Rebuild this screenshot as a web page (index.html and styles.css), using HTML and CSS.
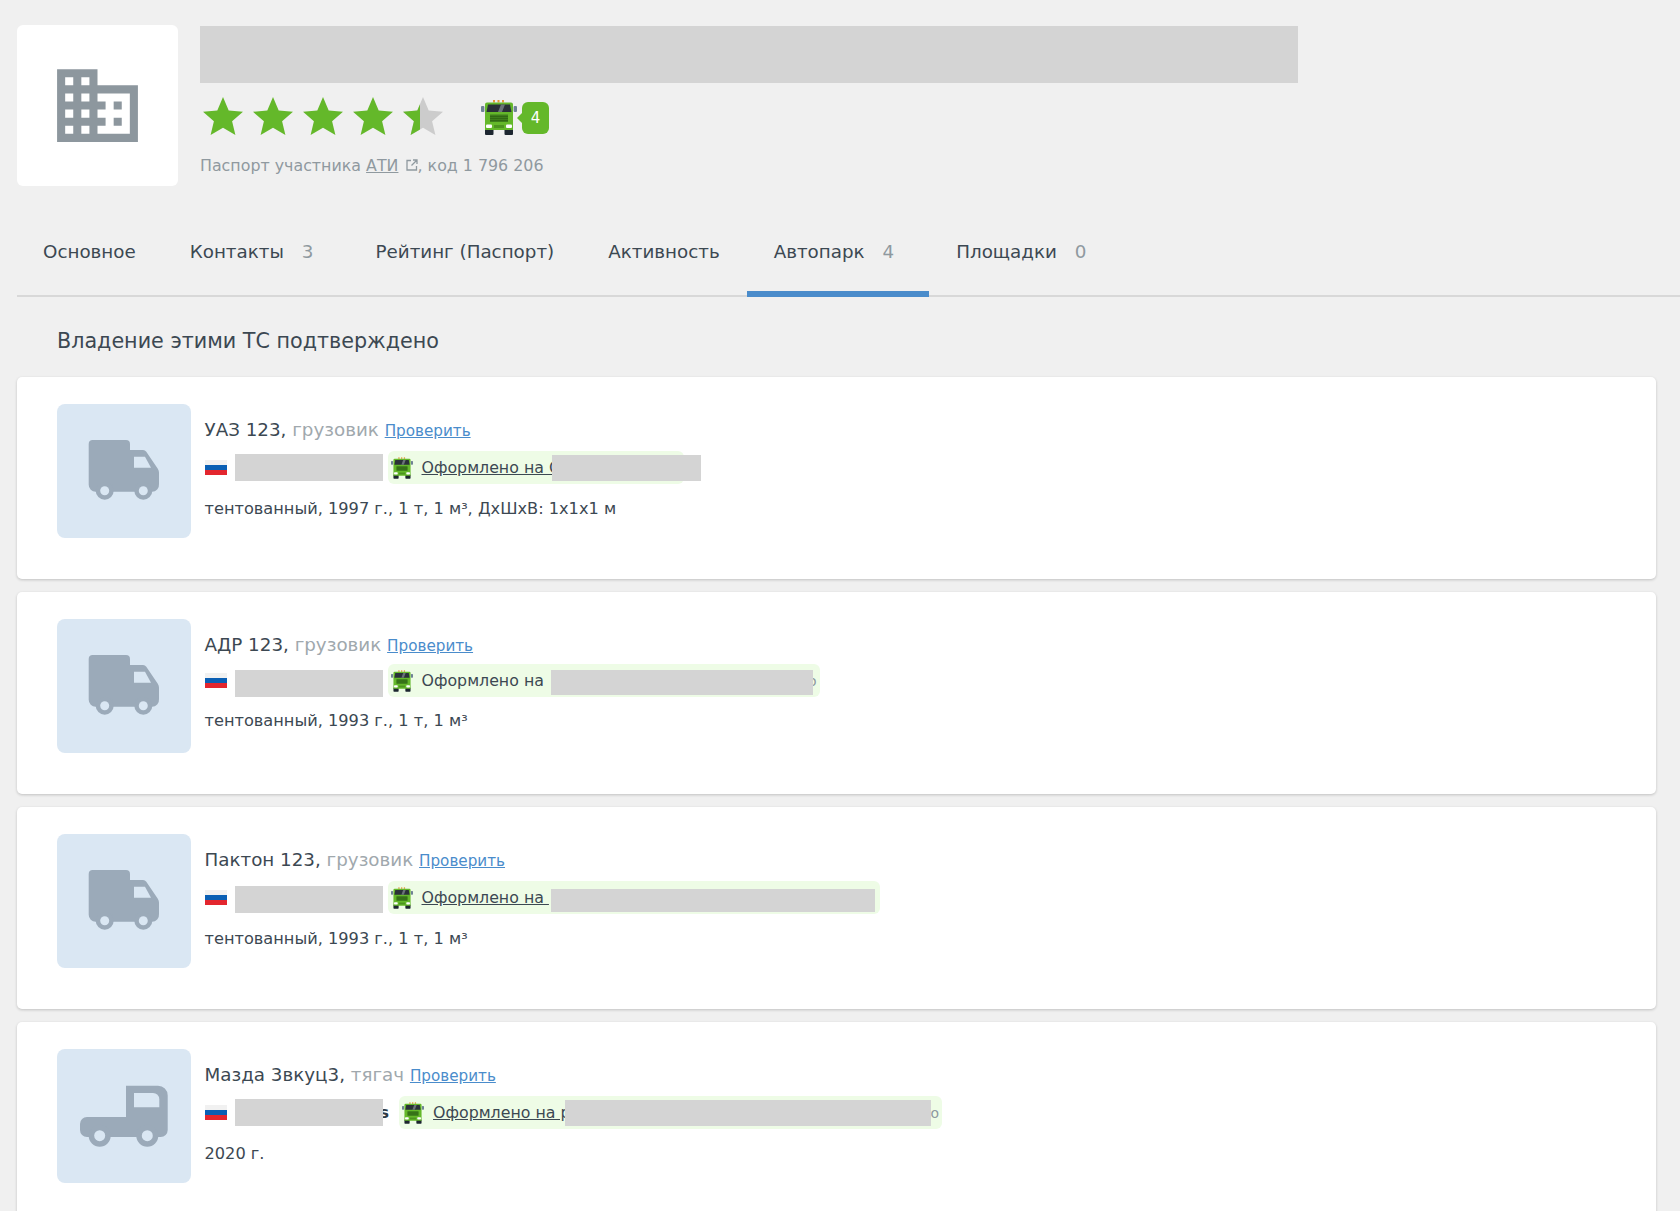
FILE: index.html
```html
<!DOCTYPE html>
<html lang="ru">
<head>
<meta charset="utf-8">
<title>Автопарк</title>
<link rel="stylesheet" href="styles.css">
</head>
<body>
<svg class="defs" width="0" height="0" aria-hidden="true">
  <defs>
    <symbol id="green-truck" viewBox="0 0 36 35">
      <rect x="12" y="0" width="2" height="2.5" fill="#e8963c"/><rect x="16.5" y="0" width="2" height="2.5" fill="#e8963c"/><rect x="21" y="0" width="2" height="2.5" fill="#e8963c"/>
      <rect x="0" y="6" width="3.4" height="6" rx="1" fill="#6f8296"/><rect x="32.6" y="6" width="3.4" height="6" rx="1" fill="#6f8296"/>
      <rect x="4" y="28" width="8.5" height="7" rx="1" fill="#1d2630"/><rect x="23.5" y="28" width="8.5" height="7" rx="1" fill="#1d2630"/>
      <path d="M6 2.5h24a2 2 0 0 1 2 2V30H4V4.500a2 2 0 0 1 2-2z" fill="#64b82a"/>
      <path d="M7 4.500h22l1.500 7.500h-25z" fill="#2a3138"/>
      <path d="M20 4.500h4l-3 7.500h-4z" fill="#6a7278"/>
      <rect x="9" y="14.500" width="18" height="7.500" fill="#3e7e1c"/>
      <path d="M9 16.500h18M9 18.500h18M9 20.500h18" stroke="#2e6512" stroke-width=".8"/>
      <rect x="5" y="24.500" width="6" height="3.500" rx="1" fill="#fff"/><rect x="25" y="24.500" width="6" height="3.500" rx="1" fill="#fff"/>
      <rect x="13" y="25" width="10" height="3" fill="#4c9420"/>
    </symbol>
    <symbol id="van" viewBox="0 0 134 134">
      <path d="M35.700 36H69a4 4 0 0 1 4 4v6h13a4 4 0 0 1 3.300 1.700l11.500 17a7 7 0 0 1 1.200 4V80a7 7 0 0 1-7 7.700H38.700a7 7 0 0 1-7-7V40a4 4 0 0 1 4-4z" fill="#9baab9"/>
      <path d="M77 52.700h11l6 11H77z" fill="#dae7f3"/>
      <circle cx="47.700" cy="86.700" r="9" fill="#9baab9"/><circle cx="47.700" cy="86.700" r="4.500" fill="#dae7f3"/>
      <circle cx="86.300" cy="86.700" r="9" fill="#9baab9"/><circle cx="86.300" cy="86.700" r="4.500" fill="#dae7f3"/>
    </symbol>
    <symbol id="tractor" viewBox="0 0 134 134">
      <path d="M69 36.700h32a9.700 9.700 0 0 1 9.700 9.700V81a7 7 0 0 1-7 7H30a7 7 0 0 1-7-7V75a7 7 0 0 1 7-7h39z" fill="#9baab9"/>
      <path d="M77 44h19a6.300 6.300 0 0 1 6.300 6.300v8H77z" fill="#dae7f3"/>
      <circle cx="42.700" cy="86.700" r="11" fill="#9baab9"/><circle cx="42.700" cy="86.700" r="5.500" fill="#dae7f3"/>
      <circle cx="90.300" cy="86.700" r="11" fill="#9baab9"/><circle cx="90.300" cy="86.700" r="5.500" fill="#dae7f3"/>
    </symbol>
    <symbol id="star" viewBox="0 0 40 38">
      <path d="M20 0l5.700 13.600 14.300 1.200-10.900 9.500 3.300 13.700-12.400-7.300-12.400 7.300 3.300-13.700L0 14.800l14.300-1.200z"/>
    </symbol>
    <clipPath id="star-part"><rect x="0" y="0" width="17" height="38"/></clipPath>
  </defs>
</svg>

<header class="profile">
  <div class="logo">
    <svg class="logo-icon" viewBox="0 0 24 24"><path d="M12 7V3H2v18h20V7H12zM6 19H4v-2h2v2zm0-4H4v-2h2v2zm0-4H4V9h2v2zm0-4H4V5h2v2zm4 12H8v-2h2v2zm0-4H8v-2h2v2zm0-4H8V9h2v2zm0-4H8V5h2v2zm10 12h-8v-2h2v-2h-2v-2h2v-2h-2V9h8v10zm-2-8h-2v2h2v-2zm0 4h-2v2h2v-2z"/></svg>
  </div>
  <div class="profile-main">
    <div class="title-mask"></div>
    <div class="rating-row">
      <div class="stars">
        <svg class="star"><use href="#star"/></svg>
        <svg class="star"><use href="#star"/></svg>
        <svg class="star"><use href="#star"/></svg>
        <svg class="star"><use href="#star"/></svg>
        <svg class="star star-half" viewBox="0 0 40 38"><use href="#star" width="40" height="38"/><g clip-path="url(#star-part)"><use class="star-fill" href="#star" width="40" height="38"/></g></svg>
      </div>
      <svg class="fleet-icon"><use href="#green-truck"/></svg>
      <span class="fleet-badge">4</span>
    </div>
    <p class="passport">Паспорт участника <a href="#">АТИ</a> <svg class="ext-icon" viewBox="0 0 12 12"><path d="M5 1.500H1v9.500h9.500V7M7 1h4v4M11 1L5.500 6.500" fill="none" stroke="currentColor" stroke-width="1.300"/></svg>, код 1 796 206</p>
  </div>
</header>

<nav class="tabs">
  <a class="tab" href="#">Основное</a>
  <a class="tab" href="#">Контакты<span class="count">3</span></a>
  <a class="tab" href="#">Рейтинг (Паспорт)</a>
  <a class="tab" href="#">Активность</a>
  <a class="tab tab-active" href="#">Автопарк<span class="count">4</span></a>
  <a class="tab" href="#">Площадки<span class="count">0</span></a>
</nav>

<h2 class="section-title">Владение этими ТС подтверждено</h2>

<main class="cards">
  <article class="card">
    <div class="thumb"><svg class="thumb-icon"><use href="#van"/></svg></div>
    <div class="info">
      <div class="name">УАЗ 123, <span class="kind">грузовик</span> <a class="check" href="#">Проверить</a></div>
      <div class="plate-row">
        <span class="flag"></span><span class="plate"></span>
        <div class="owner owner-1"><svg class="owner-icon"><use href="#green-truck"/></svg><a href="#">Оформлено на О</a><span class="mask mask-1"></span></div>
      </div>
      <div class="spec">тентованный, 1997 г., 1 т, 1 м³, ДхШхВ: 1х1х1 м</div>
    </div>
  </article>
  <article class="card">
    <div class="thumb"><svg class="thumb-icon"><use href="#van"/></svg></div>
    <div class="info">
      <div class="name">АДР 123, <span class="kind">грузовик</span> <a class="check" href="#">Проверить</a></div>
      <div class="plate-row plate-row-plain">
        <span class="flag"></span><span class="plate plate-low"></span>
        <div class="owner owner-2"><svg class="owner-icon"><use href="#green-truck"/></svg><span>Оформлено на</span><span class="tail">о</span><span class="mask mask-2"></span></div>
      </div>
      <div class="spec">тентованный, 1993 г., 1 т, 1 м³</div>
    </div>
  </article>
  <article class="card">
    <div class="thumb"><svg class="thumb-icon"><use href="#van"/></svg></div>
    <div class="info">
      <div class="name">Пактон 123, <span class="kind">грузовик</span> <a class="check" href="#">Проверить</a></div>
      <div class="plate-row">
        <span class="flag"></span><span class="plate plate-mid"></span>
        <div class="owner owner-3"><svg class="owner-icon"><use href="#green-truck"/></svg><a href="#">Оформлено на&nbsp;</a><span class="mask mask-3"></span></div>
      </div>
      <div class="spec">тентованный, 1993 г., 1 т, 1 м³</div>
    </div>
  </article>
  <article class="card">
    <div class="thumb"><svg class="thumb-icon"><use href="#tractor"/></svg></div>
    <div class="info">
      <div class="name">Мазда 3вкуц3, <span class="kind">тягач</span> <a class="check" href="#">Проверить</a></div>
      <div class="plate-row">
        <span class="flag"></span><span class="plate"></span><span class="plate-end">s</span>
        <div class="owner owner-4"><svg class="owner-icon"><use href="#green-truck"/></svg><a href="#">Оформлено на р</a><span class="tail">о</span><span class="mask mask-4"></span></div>
      </div>
      <div class="spec">2020 г.</div>
    </div>
  </article>
</main>
</body>
</html>
```
FILE: styles.css
```css
html, body {
  margin: 0;
  height: 100%;
  overflow: hidden;
}
body {
  background: #f0f0f0;
  color: #3c4852;
  font-family: "DejaVu Sans", Verdana, sans-serif;
  font-size: 16px;
}
.defs { display: block; height: 0; }
a { color: inherit; }

.profile {
  display: flex;
  gap: 22px;
  height: 161px;
  padding: 25px 0 0 17px;
}
.logo {
  width: 161px;
  height: 161px;
  background: #fff;
  border-radius: 6px;
  display: flex;
  align-items: center;
  justify-content: center;
}
.logo-icon { width: 97px; height: 97px; fill: #8d979e; }
.profile-main { display: flex; flex-direction: column; }
.title-mask {
  width: 1098px;
  height: 57px;
  margin-top: 1px;
  background: #d4d4d4;
}
.rating-row {
  display: flex;
  align-items: center;
  height: 40px;
  margin-top: 13px;
}
.stars { display: flex; gap: 10px; margin-left: 3px; }
.star { width: 40px; height: 38px; fill: #ccc; display: block; }
.star:not(.star-half) { fill: #64b82a; }
.star-fill { fill: #64b82a; }
.fleet-icon { width: 36px; height: 35px; margin: 2px 0 0 38px; }
.fleet-badge {
  position: relative;
  width: 27px;
  height: 32px;
  margin: 3px 0 0 5px;
  background: #64b82a;
  border-radius: 6px;
  color: #fff;
  font-size: 15px;
  line-height: 32px;
  text-align: center;
}
.fleet-badge::before {
  content: "";
  position: absolute;
  left: -5px;
  top: 11px;
  border-style: solid;
  border-width: 5px 5px 5px 0;
  border-color: transparent #64b82a transparent transparent;
}
.passport {
  margin: 20px 0 0;
  color: #8f999f;
  font-size: 15.85px;
  line-height: 20px;
}
.ext-icon { width: 12px; height: 12px; margin-left: 2px; }

.tabs {
  display: flex;
  margin: 0 0 0 17px;
  height: 109px;
  border-bottom: 2px solid #d8d8d8;
}
.tab {
  display: block;
  box-sizing: border-box;
  height: 111px;
  padding: 55px 27px 0;
  color: #3c4852;
  font-size: 18.3px;
  line-height: 22px;
  text-decoration: none;
}
.tab:first-child { padding-left: 26px; }
.tab-active { border-bottom: 6px solid #4a8ccb; }
.count {
  margin: 0 8px 0 18px;
  color: #8f999f;
}

.section-title {
  margin: 0;
  padding: 32px 0 0 57px;
  height: 48px;
  color: #3c4852;
  font-size: 20.7px;
  font-weight: 400;
  line-height: 24px;
}

.cards {
  display: flex;
  flex-direction: column;
  gap: 13px;
  margin: 0 24px 0 17px;
}
.card {
  display: flex;
  gap: 13.5px;
  height: 202px;
  flex: none;
  box-sizing: border-box;
  padding: 27px 40px;
  background: #fff;
  border-radius: 5px;
  box-shadow: 0 1px 3px rgba(0, 0, 0, .2);
}
.thumb {
  width: 134px;
  height: 134px;
  flex: none;
  background: #dae7f3;
  border-radius: 8px;
}
.thumb-icon { display: block; width: 134px; height: 134px; }
.info { display: flex; flex-direction: column; }
.name {
  margin-top: 14px;
  font-size: 18.3px;
  line-height: 24px;
  white-space: nowrap;
}
.kind { color: #a0a8ad; }
.check { color: #4a8ccb; font-size: 15.2px; }
.plate-row {
  display: flex;
  align-items: center;
  height: 33px;
  margin-top: 8px;
}
.plate-row-plain { margin-top: 6px; }
.plate-row-plain + .spec { margin-top: 14px; }
.flag {
  width: 22px;
  height: 15px;
  background: linear-gradient(#f1f1f1 0 33%, #0a5fb4 33% 66%, #e3262e 66%);
  flex: none;
}
.plate {
  position: relative;
  z-index: 1;
  width: 148px;
  height: 27px;
  margin-left: 8px;
  background: #d4d4d4;
  flex: none;
}
.plate-low { margin-top: 6px; }
.plate-mid { margin-top: 4px; }
.plate-end {
  margin: 0 5px 0 -3px;
  color: #2e3a44;
  font-weight: 700;
  font-size: 16px;
}
.owner {
  position: relative;
  display: flex;
  align-items: center;
  height: 33px;
  margin-left: 5px;
  padding-left: 3px;
  box-sizing: border-box;
  background: #eefce6;
  border-radius: 6px;
  font-size: 15.8px;
  white-space: nowrap;
}
.owner a { color: #3c4852; }
.owner-icon { width: 22px; height: 22px; margin-right: 9px; flex: none; }
.owner-1 { width: 296px; }
.owner-2 { width: 432px; }
.owner-3 { width: 492px; }
.owner-4 { width: 543px; }
.tail {
  position: absolute;
  right: 3px;
  color: #8f999f;
  font-size: 14px;
}
.mask {
  position: absolute;
  top: 4px;
  height: 26px;
  background: #d4d4d4;
}
.mask-1 { left: 164px; width: 149px; }
.mask-2 { left: 163px; width: 262px; top: 6px; height: 25px; }
.mask-3 { left: 163px; width: 324px; top: 8px; height: 23px; }
.mask-4 { left: 166px; width: 366px; }
.spec {
  margin-top: 15px;
  font-size: 16.2px;
  line-height: 20px;
  white-space: nowrap;
}
```
